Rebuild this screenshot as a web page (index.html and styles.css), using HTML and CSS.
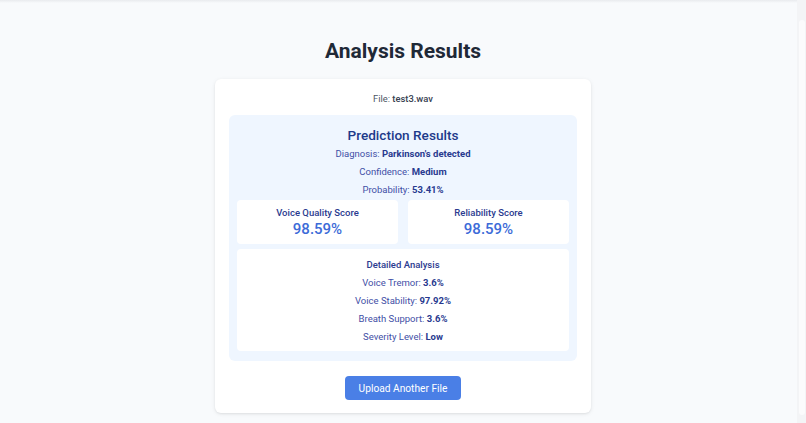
FILE: index.html
```html
<!DOCTYPE html>
<html lang="en">
<head>
<meta charset="utf-8">
<title>Analysis Results</title>
<link rel="stylesheet" href="styles.css">
</head>
<body>
<div class="topshade"></div>
<main class="page">
  <h1 class="page-title">Analysis Results</h1>
  <section class="card">
    <p class="file">File: <strong>test3.wav</strong></p>
    <div class="panel">
      <h2 class="panel-title">Prediction Results</h2>
      <p class="row">Diagnosis: <strong>Parkinson's detected</strong></p>
      <p class="row">Confidence: <strong>Medium</strong></p>
      <p class="row">Probability: <strong>53.41%</strong></p>
      <div class="scores">
        <div class="score">
          <div class="score-label">Voice Quality Score</div>
          <div class="score-value">98.59%</div>
        </div>
        <div class="score">
          <div class="score-label">Reliability Score</div>
          <div class="score-value">98.59%</div>
        </div>
      </div>
      <div class="detail">
        <h3 class="detail-title">Detailed Analysis</h3>
        <p class="row">Voice Tremor: <strong>3.6%</strong></p>
        <p class="row">Voice Stability: <strong>97.92%</strong></p>
        <p class="row">Breath Support: <strong>3.6%</strong></p>
        <p class="row">Severity Level: <strong>Low</strong></p>
      </div>
    </div>
    <div class="actions">
      <button class="btn" type="button">Upload Another File</button>
    </div>
  </section>
</main>
<div class="scrollbar"><div class="thumb"></div></div>
</body>
</html>
```

FILE: styles.css
```css
* { box-sizing: border-box; }
html, body { margin: 0; padding: 0; }
body {
  background: #f8fafc;
  font-family: Roboto, Inter, "Liberation Sans", sans-serif;
  color: #1f2937;
  min-height: 423px;
}
.topshade {
  height: 3px;
  background: linear-gradient(#e9ebee, #f8fafc);
}
.page {
  display: flex;
  flex-direction: column;
  align-items: center;
  padding-top: 34px;
}
.page-title {
  margin: 0;
  font-size: 21px;
  line-height: 28px;
  font-weight: 700;
  color: #1f2937;
}
.card {
  margin-top: 14px;
  width: 376px;
  background: #fff;
  border-radius: 6px;
  box-shadow: 0 1px 4px rgba(0,0,0,0.08), 0 1px 2px rgba(0,0,0,0.05);
  padding: 13px 14px 13px;
}
.file {
  margin: 0;
  text-align: center;
  font-size: 9.4px;
  line-height: 14px;
  color: #4b5563;
}
.file strong { font-weight: 500; color: #374151; }
.panel {
  margin-top: 9px;
  background: #eff6ff;
  border-radius: 6px;
  padding: 10px 8px 10px;
  text-align: center;
  color: #3b4ba0;
}
.panel-title {
  margin: 0;
  font-size: 13.6px;
  line-height: 20px;
  font-weight: 500;
  color: #1e3a8a;
}
.row {
  margin: 0;
  font-size: 9.5px;
  line-height: 18px;
  color: #3f4fa6;
}
.row strong { font-weight: 700; color: #283a8f; }
.scores {
  margin-top: 1px;
  display: grid;
  grid-template-columns: 1fr 1fr;
  gap: 10px;
}
.score {
  background: #fff;
  border-radius: 4px;
  padding: 6px 6px 6px;
}
.score-label {
  font-size: 9.5px;
  line-height: 14px;
  font-weight: 500;
  color: #2b3b8f;
}
.score-value {
  font-size: 15px;
  line-height: 18px;
  font-weight: 500;
  color: #3c6bd8;
}
.detail {
  margin-top: 5px;
  background: #fff;
  border-radius: 4px;
  padding: 7px 8px 5px;
}
.detail-title {
  margin: 0;
  font-size: 9.5px;
  line-height: 18px;
  font-weight: 500;
  color: #2b3b8f;
}
.actions {
  margin-top: 15px;
  display: flex;
  justify-content: center;
}
.btn {
  width: 116px;
  height: 24px;
  border: 0;
  border-radius: 4px;
  background: #4a7fe6;
  color: #fff;
  font-family: inherit;
  font-size: 10.2px;
  font-weight: 400;
  padding: 0;
}
.scrollbar {
  position: fixed;
  top: 0;
  right: 0;
  width: 9px;
  height: 100%;
  background: #f3f4f6;
}
.thumb {
  margin: 20px 1px 0 2px;
  height: 395px;
  border-radius: 3px;
  background: #fbfbfc;
}
```
